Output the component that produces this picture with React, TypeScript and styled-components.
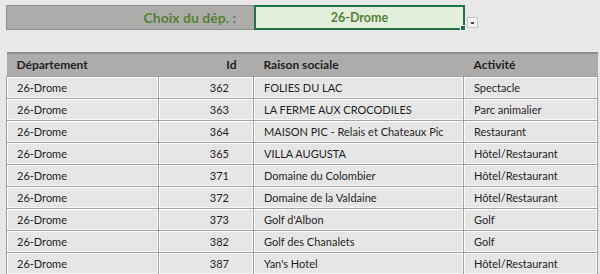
import React from "react";
import styled, { createGlobalStyle } from "styled-components";

const GlobalStyle = createGlobalStyle`
  html, body {
    margin: 0;
    padding: 0;
    background: #e8e8e8;
    font-family: Lato, "Open Sans", sans-serif;
  }
`;

const Sheet = styled.div`
  width: 600px;
  height: 274px;
  overflow: hidden;
  background: #e8e8e8;
  padding: 5px 3px 0 6px;
  box-sizing: border-box;
`;

const PickerRow = styled.div`
  display: flex;
  align-items: flex-start;
  height: 25px;
`;

const PickerLabel = styled.div`
  width: 248px;
  height: 25px;
  box-sizing: border-box;
  background: #aeabab;
  border: 1px solid #8f8c8c;
  border-right: none;
  color: #548235;
  font-weight: 700;
  font-size: 14px;
  display: flex;
  align-items: center;
  justify-content: flex-end;
  padding-right: 18px;
`;

const PickerValue = styled.div`
  position: relative;
  width: 211px;
  height: 25px;
  box-sizing: border-box;
  background: #e2efda;
  border: 2px solid #217346;
  color: #548235;
  font-weight: 700;
  font-size: 12.5px;
  display: flex;
  align-items: center;
  justify-content: center;
`;

const FillHandle = styled.span`
  position: absolute;
  right: -3px;
  bottom: -3px;
  width: 4px;
  height: 4px;
  background: #217346;
  border: 1px solid #fff;
`;

const DropButton = styled.div`
  margin-top: 12px;
  margin-left: 2px;
  width: 9px;
  height: 9px;
  background: #f4f4f4;
  border: 1px solid #c4c4c4;
  display: flex;
  align-items: center;
  justify-content: center;

  &::after {
    content: "";
    width: 3px;
    height: 2px;
    background: #444;
  }
`;

const Table = styled.table`
  margin-top: 22px;
  width: 591px;
  border-collapse: collapse;
  table-layout: fixed;
  font-size: 11px;
  color: #1f1f1f;
`;

const HeadCell = styled.th<{ $align?: "left" | "right" }>`
  height: 23px;
  padding: 0 10px;
  box-sizing: border-box;
  background: #aeabab;
  border-top: 2px solid #8f8c8c;
  font-weight: 700;
  font-size: 12px;
  text-align: ${(p) => p.$align ?? "left"};
`;

const Cell = styled.td<{ $align?: "left" | "right" }>`
  height: 22px;
  padding: 0 10px;
  box-sizing: border-box;
  background: #e7e6e6;
  border: 1px solid #a3a1a1;
  box-shadow: inset 1px 1px 0 #ffffff, inset -1px -1px 0 #f7f7f7;
  text-align: ${(p) => p.$align ?? "left"};
  white-space: nowrap;
  overflow: hidden;
`;

const IdCell = styled(Cell)`
  padding-right: 24px;
`;

const IdHead = styled(HeadCell)`
  padding-right: 17px;
`;

type Lieu = { id: number; nom: string; activite: string };

const lieux: Lieu[] = [
  { id: 362, nom: "FOLIES DU LAC", activite: "Spectacle" },
  { id: 363, nom: "LA FERME AUX CROCODILES", activite: "Parc animalier" },
  { id: 364, nom: "MAISON PIC - Relais et Chateaux Pic", activite: "Restaurant" },
  { id: 365, nom: "VILLA AUGUSTA", activite: "Hôtel/Restaurant" },
  { id: 371, nom: "Domaine du Colombier", activite: "Hôtel/Restaurant" },
  { id: 372, nom: "Domaine de la Valdaine", activite: "Hôtel/Restaurant" },
  { id: 373, nom: "Golf d'Albon", activite: "Golf" },
  { id: 382, nom: "Golf des Chanalets", activite: "Golf" },
  { id: 387, nom: "Yan's Hotel", activite: "Hôtel/Restaurant" },
];

export default function App() {
  const dep = "26-Drome";
  return (
    <Sheet>
      <GlobalStyle />
      <PickerRow>
        <PickerLabel>Choix du dép. :</PickerLabel>
        <PickerValue>
          {dep}
          <FillHandle />
        </PickerValue>
        <DropButton />
      </PickerRow>
      <Table>
        <colgroup>
          <col style={{ width: 152 }} />
          <col style={{ width: 95 }} />
          <col style={{ width: 210 }} />
          <col style={{ width: 134 }} />
        </colgroup>
        <thead>
          <tr>
            <HeadCell>Département</HeadCell>
            <IdHead $align="right">Id</IdHead>
            <HeadCell>Raison sociale</HeadCell>
            <HeadCell>Activité</HeadCell>
          </tr>
        </thead>
        <tbody>
          {lieux.map((l) => (
            <tr key={l.id}>
              <Cell>{dep}</Cell>
              <IdCell $align="right">{l.id}</IdCell>
              <Cell>{l.nom}</Cell>
              <Cell>{l.activite}</Cell>
            </tr>
          ))}
        </tbody>
      </Table>
    </Sheet>
  );
}
